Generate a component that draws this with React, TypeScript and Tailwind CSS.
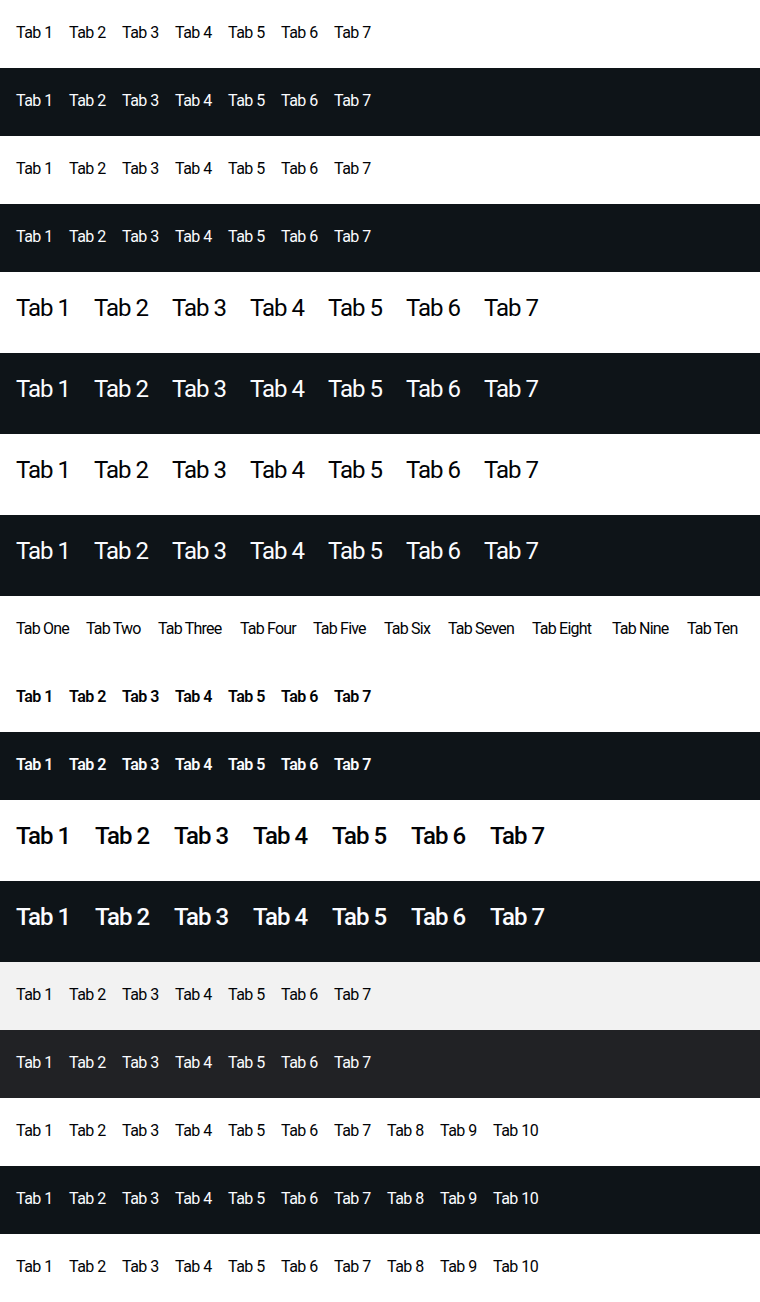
import React from "react";

type Theme = "light" | "dark" | "lightSurface" | "darkSurface";

const bg: Record<Theme, string> = {
  light: "bg-white text-[#010205]",
  dark: "bg-[#0e1418] text-[#fbfcff]",
  lightSurface: "bg-[#f2f2f2] text-[#010205]",
  darkSurface: "bg-[#212225] text-[#fbfcff]",
};

const seven = ["Tab 1", "Tab 2", "Tab 3", "Tab 4", "Tab 5", "Tab 6", "Tab 7"];
const ten = [...seven, "Tab 8", "Tab 9", "Tab 10"];
const words = [
  ["Tab One", 54],
  ["Tab Two", 56],
  ["Tab Three", 66],
  ["Tab Four", 57],
  ["Tab Five", 55],
  ["Tab Six", 48],
  ["Tab Seven", 68],
  ["Tab Eight", 64],
  ["Tab Nine", 59],
  ["Tab Ten", 51],
] as const;

function SmallBar({
  theme,
  tabs,
  bold,
}: {
  theme: Theme;
  tabs: string[];
  bold?: boolean;
}) {
  return (
    <div className={`h-[68px] px-4 pt-[21px] ${bg[theme]}`}>
      <div className="flex gap-4">
        {tabs.map((t) => (
          <button
            key={t}
            className={`w-[37px] shrink-0 whitespace-nowrap text-left text-[16px] leading-[24px] tracking-[-0.5px] ${
              bold ? "font-semibold" : "font-normal"
            }`}
          >
            {t}
          </button>
        ))}
      </div>
    </div>
  );
}

function MediumBar({ theme, bold }: { theme: Theme; bold?: boolean }) {
  return (
    <div className={`h-[81px] px-4 pt-[18px] ${bg[theme]}`}>
      <div className="flex gap-[24px]">
        {seven.map((t) => (
          <button
            key={t}
            className={`${
              bold ? "w-[55px] font-medium" : "w-[54px] font-normal"
            } shrink-0 whitespace-nowrap text-left text-[24px] leading-[36px] tracking-[-1px]`}
          >
            {t}
          </button>
        ))}
      </div>
    </div>
  );
}

export default function App() {
  return (
    <div className="w-[760px] font-['Roboto',sans-serif]">
      <SmallBar theme="light" tabs={seven} />
      <SmallBar theme="dark" tabs={seven} />
      <SmallBar theme="light" tabs={seven} />
      <SmallBar theme="dark" tabs={seven} />
      <MediumBar theme="light" />
      <MediumBar theme="dark" />
      <MediumBar theme="light" />
      <MediumBar theme="dark" />
      <div className="h-[68px] px-4 pt-[21px] bg-white text-[#010205]">
        <div className="flex gap-4">
          {words.map(([t, w]) => (
            <button
              key={t}
              style={{ width: w }}
              className="shrink-0 whitespace-nowrap text-left text-[16px] leading-[24px] tracking-[-0.8px]"
            >
              {t}
            </button>
          ))}
        </div>
      </div>
      <SmallBar theme="light" tabs={seven} bold />
      <SmallBar theme="dark" tabs={seven} bold />
      <MediumBar theme="light" bold />
      <MediumBar theme="dark" bold />
      <SmallBar theme="lightSurface" tabs={seven} />
      <SmallBar theme="darkSurface" tabs={seven} />
      <SmallBar theme="light" tabs={ten} />
      <SmallBar theme="dark" tabs={ten} />
      <SmallBar theme="light" tabs={ten} />
    </div>
  );
}
